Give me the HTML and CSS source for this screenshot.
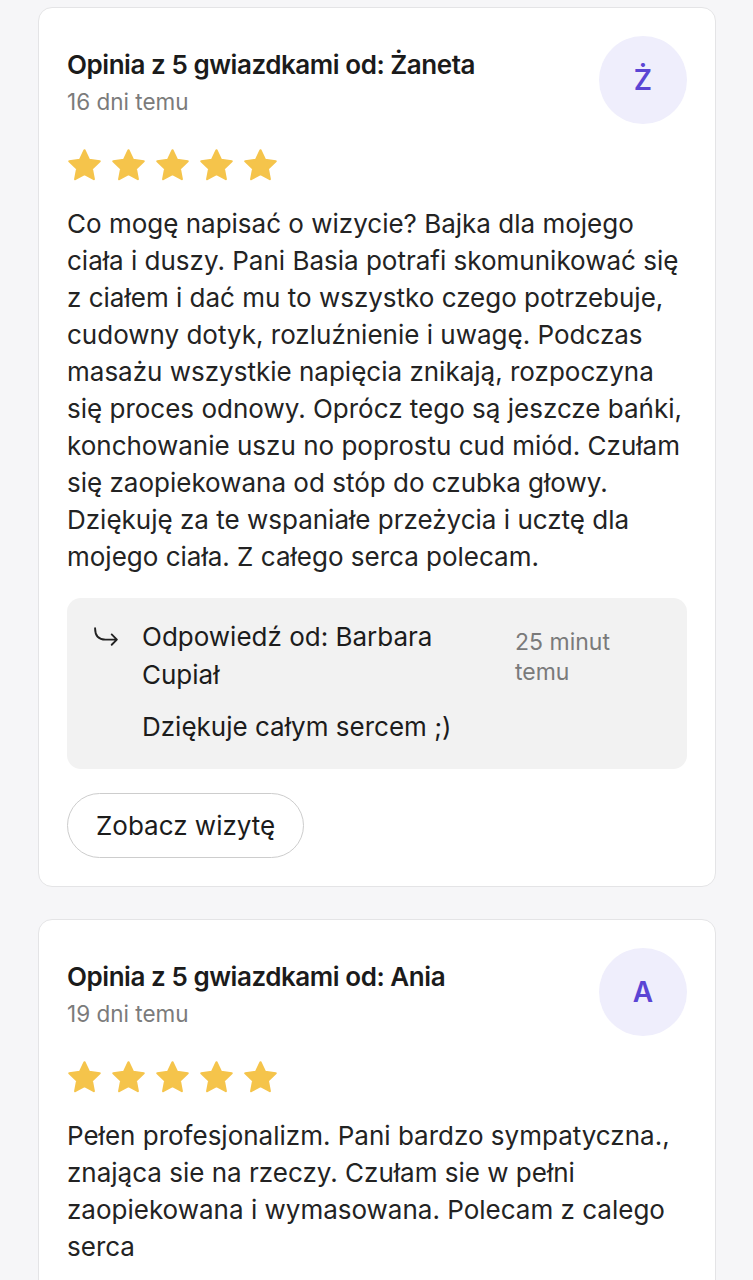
FILE: index.html
```html
<!DOCTYPE html>
<html lang="pl">
<head>
<meta charset="utf-8">
<title>Opinie</title>
<link rel="stylesheet" href="styles.css">
</head>
<body>
<main class="list">
  <article class="card">
    <header class="card-head">
      <div class="head-text">
        <h2 class="title">Opinia z 5 gwiazdkami od: Żaneta</h2>
        <div class="date">16 dni temu</div>
      </div>
      <div class="avatar">Ż</div>
    </header>
    <div class="stars">
      <svg class="star" viewBox="0.6 0.5 22.8 21.8"><path d="M12 1.8l3 6.3 6.9.9-5.1 4.8 1.3 6.8L12 17.3l-6.1 3.3 1.3-6.8-5.1-4.8 6.9-.9z"/></svg>
      <svg class="star" viewBox="0.6 0.5 22.8 21.8"><path d="M12 1.8l3 6.3 6.9.9-5.1 4.8 1.3 6.8L12 17.3l-6.1 3.3 1.3-6.8-5.1-4.8 6.9-.9z"/></svg>
      <svg class="star" viewBox="0.6 0.5 22.8 21.8"><path d="M12 1.8l3 6.3 6.9.9-5.1 4.8 1.3 6.8L12 17.3l-6.1 3.3 1.3-6.8-5.1-4.8 6.9-.9z"/></svg>
      <svg class="star" viewBox="0.6 0.5 22.8 21.8"><path d="M12 1.8l3 6.3 6.9.9-5.1 4.8 1.3 6.8L12 17.3l-6.1 3.3 1.3-6.8-5.1-4.8 6.9-.9z"/></svg>
      <svg class="star" viewBox="0.6 0.5 22.8 21.8"><path d="M12 1.8l3 6.3 6.9.9-5.1 4.8 1.3 6.8L12 17.3l-6.1 3.3 1.3-6.8-5.1-4.8 6.9-.9z"/></svg>
    </div>
    <p class="body">Co mogę napisać o wizycie? Bajka dla mojego ciała i duszy. Pani Basia potrafi skomunikować się z ciałem i dać mu to wszystko czego potrzebuje, cudowny dotyk, rozluźnienie i uwagę. Podczas masażu wszystkie napięcia znikają, rozpoczyna się proces odnowy. Oprócz tego są jeszcze bańki, konchowanie uszu no poprostu cud miód. Czułam się zaopiekowana od stóp do czubka głowy. Dziękuję za te wspaniałe przeżycia i ucztę dla mojego ciała. Z całego serca polecam.</p>
    <section class="reply">
      <svg class="reply-icon" viewBox="0 0 26 22"><path d="M2 2c0 7 3.5 11 10 11h11M18 8l5 5-5 5"/></svg>
      <div class="reply-main">
        <div class="reply-top">
          <div class="reply-name">Odpowiedź od: Barbara Cupiał</div>
          <div class="reply-time">25 minut temu</div>
        </div>
        <p class="reply-text">Dziękuje całym sercem ;)</p>
      </div>
    </section>
    <button class="btn" type="button">Zobacz wizytę</button>
  </article>

  <article class="card">
    <header class="card-head">
      <div class="head-text">
        <h2 class="title">Opinia z 5 gwiazdkami od: Ania</h2>
        <div class="date">19 dni temu</div>
      </div>
      <div class="avatar">A</div>
    </header>
    <div class="stars">
      <svg class="star" viewBox="0.6 0.5 22.8 21.8"><path d="M12 1.8l3 6.3 6.9.9-5.1 4.8 1.3 6.8L12 17.3l-6.1 3.3 1.3-6.8-5.1-4.8 6.9-.9z"/></svg>
      <svg class="star" viewBox="0.6 0.5 22.8 21.8"><path d="M12 1.8l3 6.3 6.9.9-5.1 4.8 1.3 6.8L12 17.3l-6.1 3.3 1.3-6.8-5.1-4.8 6.9-.9z"/></svg>
      <svg class="star" viewBox="0.6 0.5 22.8 21.8"><path d="M12 1.8l3 6.3 6.9.9-5.1 4.8 1.3 6.8L12 17.3l-6.1 3.3 1.3-6.8-5.1-4.8 6.9-.9z"/></svg>
      <svg class="star" viewBox="0.6 0.5 22.8 21.8"><path d="M12 1.8l3 6.3 6.9.9-5.1 4.8 1.3 6.8L12 17.3l-6.1 3.3 1.3-6.8-5.1-4.8 6.9-.9z"/></svg>
      <svg class="star" viewBox="0.6 0.5 22.8 21.8"><path d="M12 1.8l3 6.3 6.9.9-5.1 4.8 1.3 6.8L12 17.3l-6.1 3.3 1.3-6.8-5.1-4.8 6.9-.9z"/></svg>
    </div>
    <p class="body">Pełen profesjonalizm. Pani bardzo sympatyczna., znająca sie na rzeczy. Czułam sie w pełni zaopiekowana i wymasowana. Polecam z calego serca</p>
  </article>
</main>
</body>
</html>
```
FILE: styles.css
```css
* { box-sizing: border-box; }
html, body {
  margin: 0;
  padding: 0;
  background: #f6f6f8;
  font-family: "Inter", "Noto Sans", sans-serif;
  color: #1c1c1c;
}
.list {
  display: flex;
  flex-direction: column;
  gap: 32px;
  padding: 7px 37px 0 38px;
}
.card {
  background: #fff;
  border: 1.5px solid #e4e4e6;
  border-radius: 14px;
  padding: 28px 28px 28px 28px;
}
.card-head {
  display: flex;
  justify-content: space-between;
  align-items: flex-start;
}
.head-text {
  padding-top: 12px;
  display: flex;
  flex-direction: column;
  gap: 5px;
}
.title {
  margin: 0;
  font-size: 26px;
  line-height: 34px;
  font-weight: 600;
  letter-spacing: -0.45px;
  color: #1b1b1b;
}
.date {
  font-size: 22.5px;
  line-height: 29px;
  color: #7b7b7b;
}
.avatar {
  width: 88px;
  height: 88px;
  flex: none;
  border-radius: 50%;
  background: #efeefc;
  color: #5b45d4;
  font-size: 28px;
  font-weight: 600;
  display: flex;
  align-items: center;
  justify-content: center;
}
.stars {
  display: flex;
  gap: 9px;
  margin-top: 24px;
}
.star {
  width: 35px;
  height: 34px;
  fill: #f5c44b;
  stroke: #f5c44b;
  stroke-width: 1.4;
  stroke-linejoin: round;
}
.body {
  margin: 23px 0 0;
  font-size: 26px;
  line-height: 37px;
  color: #232323;
}
.reply {
  margin-top: 23px;
  background: #f2f2f2;
  border-radius: 14px;
  padding: 20px 26px 23px 26px;
  display: flex;
  gap: 22px;
}
.reply-icon {
  width: 27px;
  height: 23px;
  flex: none;
  margin-top: 8px;
  fill: none;
  stroke: #222;
  stroke-width: 1.8;
  stroke-linecap: round;
  stroke-linejoin: round;
}
.reply-main {
  flex: 1;
}
.reply-top {
  display: flex;
  gap: 24px;
}
.reply-name {
  flex: 1;
  font-size: 26px;
  line-height: 38px;
  color: #1c1c1c;
}
.reply-time {
  width: 146px;
  flex: none;
  margin-top: 9px;
  font-size: 23px;
  line-height: 30px;
  color: #7a7a7a;
}
.reply-text {
  margin: 14px 0 0;
  font-size: 26px;
  line-height: 38px;
  color: #1c1c1c;
}
.btn {
  margin-top: 24px;
  height: 65px;
  padding: 0 28px;
  border: 1.5px solid #cdcdcd;
  border-radius: 33px;
  background: #fff;
  font-family: inherit;
  font-size: 26px;
  color: #1c1c1c;
  cursor: pointer;
}
```
